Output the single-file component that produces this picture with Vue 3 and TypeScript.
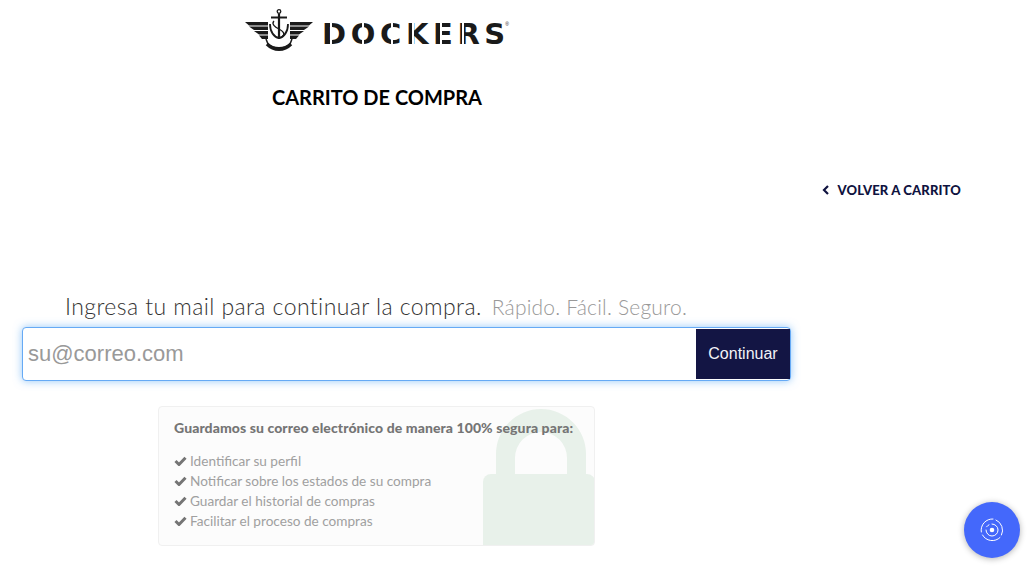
<script setup lang="ts">
const reasons: string[] = [
  'Identificar su perfil',
  'Notificar sobre los estados de su compra',
  'Guardar el historial de compras',
  'Facilitar el proceso de compras',
]
const stencilCuts: number[] = [8, 40, 69, 90, 118, 140]
</script>

<template>
  <div class="page">
    <header class="head">
      <div class="logo">
        <svg class="emblem" width="68" height="42" viewBox="0 0 68 42" aria-hidden="true">
          <g fill="#1a1a1a">
            <path d="M0 13h23v3.500H4z" />
            <path d="M4 17.500h19V21H9z" />
            <path d="M9 22h14v3.500H14z" />
            <path d="M14 26.500h9V30h-6z" />
            <path d="M68 13H45v3.500h19z" />
            <path d="M64 17.500H45V21h14z" />
            <path d="M59 22H45v3.500h9z" />
            <path d="M54 26.500h-9V30h6z" />
          </g>
          <g fill="none" stroke="#1a1a1a">
            <circle cx="34" cy="2.500" r="1.800" stroke-width="1.300" />
            <path d="M34 4.500V30" stroke-width="2.200" />
            <path d="M26 8.500h16" stroke-width="2" />
            <path d="M25 15c0 8 4 13 9 14 5-1 9-6 9-14" stroke-width="1.800" />
            <path d="M29 12c-3 3 1 6 5 8s7 5 3 8" stroke-width="1.300" />
            <path d="M21 30l2 5c6 5 16 5 22 0l2-5" stroke-width="1.500" />
            <path d="M22 35c7 7 17 7 24 0" stroke-width="3.500" />
          </g>
        </svg>
        <span class="wordmark">DOCKER<span class="last">S</span><i v-for="cut in stencilCuts" :key="cut" class="cut" :style="{ left: cut + 'px' }"></i></span>
        <span class="reg">®</span>
      </div>
      <h1 class="title">CARRITO DE COMPRA</h1>
    </header>

    <div class="back-row">
      <a class="back" href="#">
        <svg width="8" height="10" viewBox="0 0 8 10" aria-hidden="true">
          <path d="M6 1 2 5l4 4" fill="none" stroke="#0f1340" stroke-width="2.200" />
        </svg>
        VOLVER A CARRITO
      </a>
    </div>

    <p class="prompt">
      Ingresa tu mail para continuar la compra.<span class="muted">Rápido. Fácil. Seguro.</span>
    </p>

    <form class="email" @submit.prevent>
      <input class="field" type="email" placeholder="su@correo.com" />
      <button class="go" type="submit">Continuar</button>
    </form>

    <section class="card">
      <svg class="lock" width="112" height="137" viewBox="0 0 112 137" aria-hidden="true">
        <path fill="#e8f1ea" d="M13 66V45A45 45 0 0 1 103 45V66H84V49A26 26 0 0 0 32 49V66z" />
        <path fill="#e8f1ea" d="M8 65h96a8 8 0 0 1 8 8v64H0V73a8 8 0 0 1 8-8z" />
      </svg>
      <h2 class="card-title">Guardamos su correo electrónico de manera 100% segura para:</h2>
      <ul class="list">
        <li v-for="reason in reasons" :key="reason">
          <svg width="13" height="10" viewBox="0 0 13 10" aria-hidden="true">
            <path d="M1.500 5l3.500 3.500L11.500 1.800" fill="none" stroke="#757575" stroke-width="3" />
          </svg>
          {{ reason }}
        </li>
      </ul>
    </section>

    <button class="fab" type="button" aria-label="Asistente">
      <svg width="26" height="26" viewBox="0 0 26 26" aria-hidden="true">
        <circle cx="13" cy="13" r="2.300" fill="#fff" />
        <g fill="none" stroke="#fff" stroke-width="1" stroke-linecap="round">
          <path d="M13 7a6 6 0 1 1-6 6" />
          <path d="M7.600 9.800A6 6 0 0 1 10 7.800" />
          <path d="M17 3a11 11 0 0 1 5.500 15" />
          <path d="M21 20.500A11 11 0 0 1 3.500 18" />
          <path d="M2.300 15A11 11 0 0 1 14 2" />
        </g>
      </svg>
    </button>
  </div>
</template>

<style>
html,
body {
  margin: 0;
  background: #fff;
}
</style>

<style scoped>
.page {
  position: relative;
  height: 573px;
  overflow: hidden;
  font-family: Lato, "Open Sans", sans-serif;
  display: flex;
  flex-direction: column;
  align-items: flex-start;
}
.head {
  width: 754px;
  display: flex;
  flex-direction: column;
  align-items: center;
  padding-top: 9px;
}
.logo {
  display: flex;
  align-items: center;
  height: 42px;
  color: #1a1a1a;
}
.emblem {
  margin-right: 9px;
}
.wordmark {
  position: relative;
  top: 4px;
  font-family: "DejaVu Sans", sans-serif;
  font-weight: 700;
  font-size: 29px;
  letter-spacing: 4.600px;
  line-height: 42px;
  white-space: nowrap;
}
.last {
  letter-spacing: 0;
}
.cut {
  position: absolute;
  top: 8px;
  bottom: 8px;
  width: 1.500px;
  background: #fff;
}
.reg {
  font-family: "Liberation Sans", sans-serif;
  font-size: 5px;
  align-self: flex-start;
  margin-top: 12px;
}
.title {
  margin: 24px 0 0;
  font-size: 20px;
  line-height: 44px;
  font-weight: 700;
  color: #000;
  white-space: nowrap;
}
.back-row {
  align-self: stretch;
  display: flex;
  justify-content: flex-end;
  padding: 61px 67px 0 0;
}
.back {
  display: flex;
  align-items: center;
  gap: 7px;
  font-size: 13px;
  letter-spacing: 0.15px;
  line-height: 20px;
  font-weight: 900;
  color: #0f1340;
  text-decoration: none;
}
.prompt {
  margin: 90px 0 0 65px;
  font-size: 23px;
  letter-spacing: 0.42px;
  line-height: 32px;
  font-weight: 300;
  color: #333;
  white-space: nowrap;
}
.muted {
  margin-left: 10px;
  font-size: 21px;
  letter-spacing: 0.2px;
  color: #999;
}
.email {
  box-sizing: border-box;
  width: 769px;
  height: 54px;
  margin: 4px 0 0 22px;
  display: flex;
  padding: 1px 0 1px 1px;
  border: 1px solid #66aaf5;
  border-radius: 4px;
  box-shadow: 0 0 9px rgba(102, 175, 245, 0.7);
  background: #fff;
}
.field {
  flex: 1;
  min-width: 0;
  border: 0;
  outline: 0;
  padding: 0 4px;
  font-family: "Liberation Sans", sans-serif;
  font-size: 22px;
  background: transparent;
}
.field::placeholder {
  color: #999;
  opacity: 1;
}
.go {
  width: 94px;
  border: 0;
  background: #131544;
  color: #f2f2f7;
  font-family: "Liberation Sans", sans-serif;
  font-size: 16px;
  padding: 0;
}
.card {
  position: relative;
  box-sizing: border-box;
  width: 437px;
  height: 140px;
  margin: 25px 0 0 158px;
  padding: 11px 15px;
  overflow: hidden;
  background: #fcfcfc;
  border: 1px solid #f0f0f0;
  border-radius: 4px;
}
.lock {
  position: absolute;
  right: -1px;
  bottom: -1px;
}
.card-title {
  position: relative;
  margin: 0;
  font-size: 14px;
  letter-spacing: 0.09px;
  line-height: 20px;
  font-weight: 900;
  color: #757575;
  white-space: nowrap;
}
.list {
  position: relative;
  list-style: none;
  margin: 13px 0 0;
  padding: 0;
  font-size: 13.600px;
  line-height: 20px;
  color: #a0a0a0;
}
.list li {
  display: flex;
  align-items: center;
  gap: 3px;
  white-space: nowrap;
}
.fab {
  position: absolute;
  left: 964px;
  top: 502px;
  width: 56px;
  height: 56px;
  padding: 0;
  border: 0;
  border-radius: 50%;
  background: #4468fb;
  box-shadow: 0 1px 6px rgba(0, 0, 0, 0.3);
  display: flex;
  align-items: center;
  justify-content: center;
}
</style>
